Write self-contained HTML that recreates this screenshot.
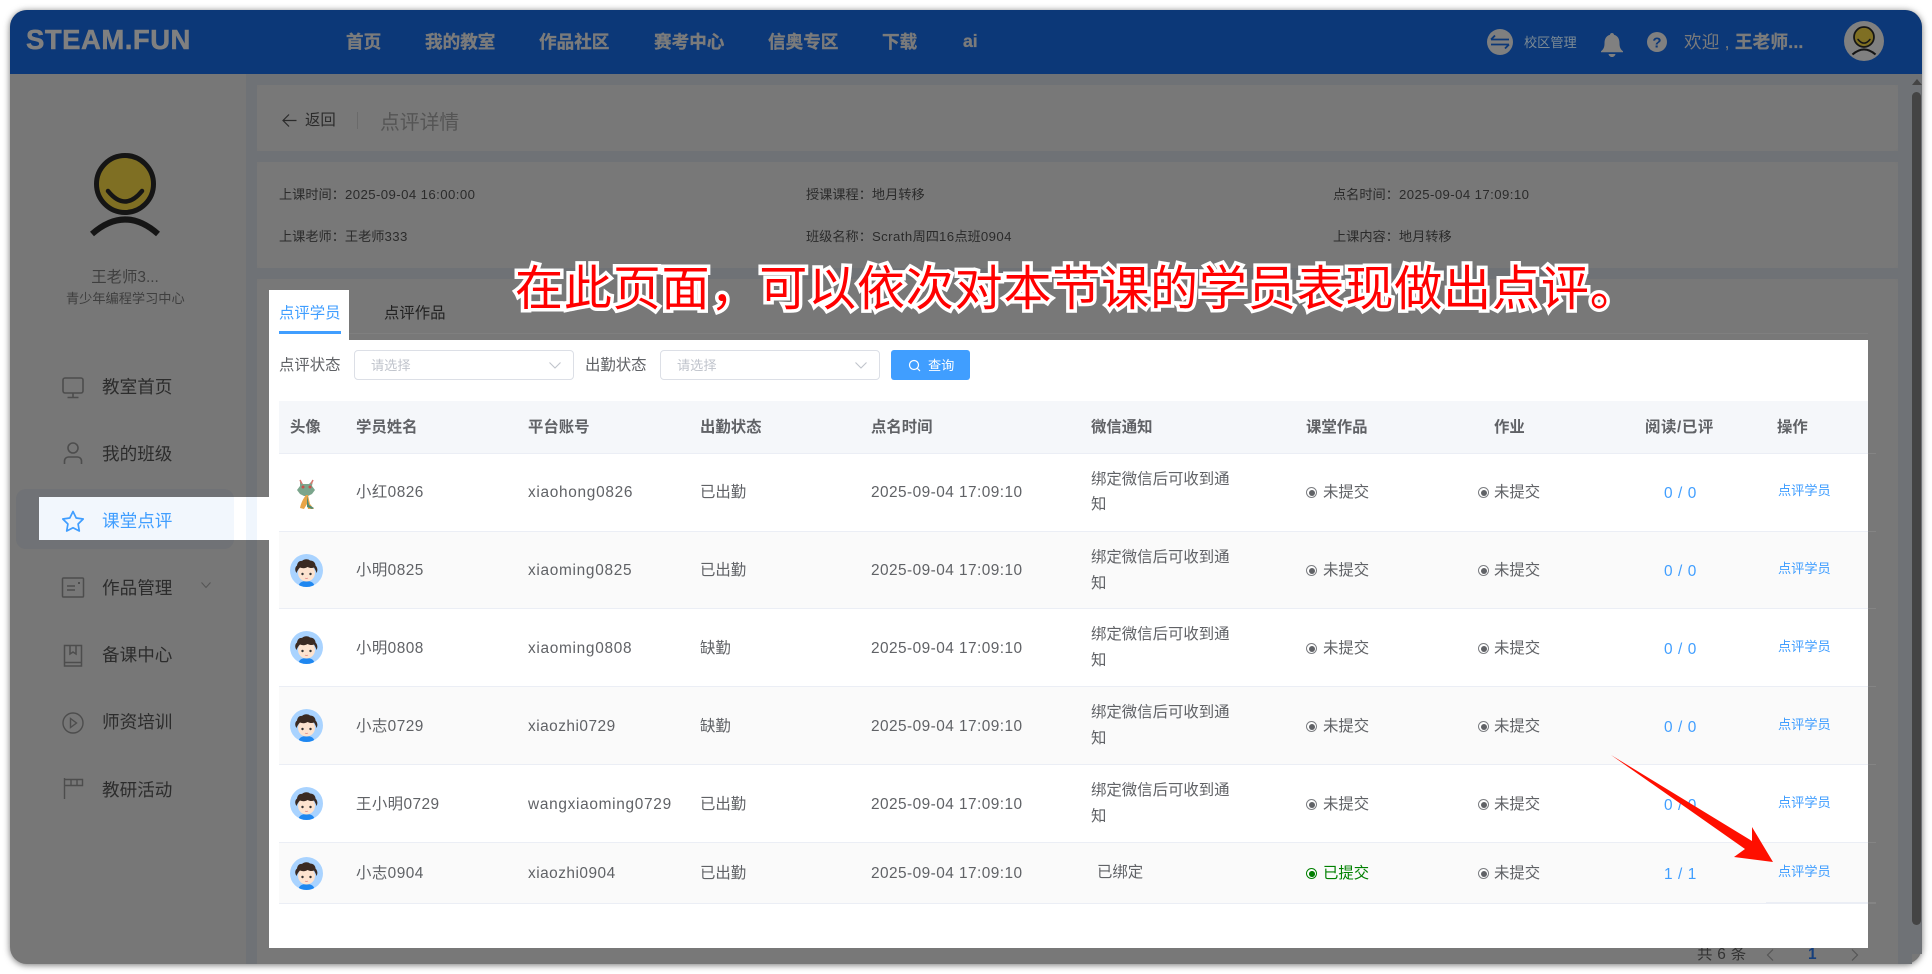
<!DOCTYPE html>
<html lang="zh-CN"><head><meta charset="utf-8"><title>点评详情</title>
<style>
html,body{margin:0;padding:0;background:#fff;width:1932px;height:974px;overflow:hidden}
body{font-family:"Liberation Sans","Noto Sans CJK SC",sans-serif;position:relative}
.a{position:absolute}
.t{position:absolute;white-space:nowrap;line-height:20px;height:20px}
#win{position:absolute;left:10px;top:10px;width:1912px;height:954px;border-radius:17px;overflow:hidden;background:#777;box-shadow:0 1px 7px rgba(0,0,0,.55)}
.nav{font-size:17.6px;font-weight:bold;color:#7b7b7b;-webkit-text-stroke:.35px #7b7b7b}
.i{font-size:13.2px;color:#2b2b2b}
.i span{letter-spacing:.42px}
.m{font-size:17.6px;color:#2c2c2c}
.th{font-size:15.4px;font-weight:bold;color:#606266}
.c{font-size:15.4px;color:#606266;letter-spacing:.45px}
.x{font-size:15.4px;color:#606266;letter-spacing:.7px}
.z{letter-spacing:.5px}
.w{font-size:15.4px;color:#606266;letter-spacing:0}
.op{font-size:13.2px;color:#409eff}
.rd{font-size:15.4px;color:#409eff;letter-spacing:.6px}
.r{position:absolute;width:11px;height:11px;border-radius:50%;border:1px solid #7c7e82;box-sizing:border-box;background:#fff}
.r:after{content:"";position:absolute;left:1.5px;top:1.5px;width:6px;height:6px;border-radius:50%;background:#606266}
.row{position:absolute;left:279px;width:1589px;box-sizing:border-box;border-bottom:1px solid #ebeef5}
.ext{position:absolute;left:1868px;width:8px;height:1px;background:#848484}
svg{position:absolute;overflow:visible}
</style></head><body>
<svg width="0" height="0" style="position:absolute"><defs>
<symbol id="boy" viewBox="0 0 33 33">
<clipPath id="cp"><circle cx="16.5" cy="16.5" r="16.5"/></clipPath>
<g clip-path="url(#cp)"><rect width="33" height="33" fill="#a9d3ff"/>
<path d="M8.500 33c0-4 3-6 8-6s8 2 8 6z" fill="#1f87f0"/>
<ellipse cx="16.500" cy="19" rx="8.500" ry="8.500" fill="#fde3cf"/>
<path d="M6.500 19c-2-3-1.500-6 .5-7.500C7.500 8 10 6.500 12 7c1.500-2 6-2.500 8 -.5 3 0 5.500 2 5.500 5 2 2 2.500 5 1 7.500-.5-2-1.500-4-2.500-5.500-2 1-4.500 .5-6.500-.5-2 1.500-5 1.500-7.500 .5-1.500 1.500-2.500 3-3.500 5.500z" fill="#3a2a22"/>
<circle cx="12.500" cy="20" r="1.200" fill="#333"/><circle cx="20.500" cy="20" r="1.200" fill="#333"/>
<path d="M15 24q1.500 1 3 0" stroke="#d77" stroke-width=".7" fill="none"/></g></symbol>
<symbol id="face" viewBox="0 0 100 100">
<circle cx="50" cy="40" r="28.500" fill="#7f6f23" stroke="#151515" stroke-width="5"/>
<path d="M33 47Q50 68 67 47" fill="none" stroke="#151515" stroke-width="4.500" stroke-linecap="round"/>
<path d="M17 90Q50 61 83 90" fill="none" stroke="#151515" stroke-width="6"/></symbol>
</defs></svg>

<div id="win"></div>
<!-- header -->
<div class="a" style="left:10px;top:10px;width:1912px;height:64px;background:#0c3878;border-radius:17px 17px 0 0"></div>
<div class="t" style="left:26px;top:30px;height:20px;font-size:27.5px;font-weight:bold;color:#808080;letter-spacing:.5px;-webkit-text-stroke:.5px #808080">STEAM.FUN</div>
<div class="t nav" style="left:346px;top:32px">首页</div>
<div class="t nav" style="left:425px;top:32px">我的教室</div>
<div class="t nav" style="left:539px;top:32px">作品社区</div>
<div class="t nav" style="left:654px;top:32px">赛考中心</div>
<div class="t nav" style="left:768px;top:32px">信奥专区</div>
<div class="t nav" style="left:882px;top:32px">下载</div>
<div class="t nav" style="left:963px;top:31px">ai</div>
<svg style="left:1487px;top:29px" width="26" height="26" viewBox="0 0 26 26"><circle cx="13" cy="13" r="13" fill="#7f7f7f"/><path d="M4 10.500h18M4 10.500l4-4M22 15.500H4M22 15.500l-4 4" stroke="#0c3878" stroke-width="1.800" fill="none"/></svg>
<div class="t" style="left:1524px;top:33px;font-size:13.2px;color:#7c8a94">校区管理</div>
<svg style="left:1600px;top:32px" width="24" height="25" viewBox="0 0 24 25"><path d="M12 1c1.200 0 2 .8 2 1.800 4 1 5.500 4.500 5.500 8.500 0 4 1 6 3.500 8v1H1v-1c2.500-2 3.500-4 3.500-8 0-4 1.500-7.500 5.500-8.500C10 1.800 10.800 1 12 1z" fill="#808080"/><path d="M8.500 22h7c-.5 2-2 3-3.500 3s-3-1-3.500-3z" fill="#808080"/></svg>
<svg style="left:1647px;top:32px" width="20" height="20" viewBox="0 0 20 20"><circle cx="10" cy="10" r="10" fill="#808080"/><text x="10" y="15.500" text-anchor="middle" font-family="Liberation Sans" font-weight="bold" font-size="15" fill="#0c3878">?</text></svg>
<div class="t" style="left:1684px;top:32px;font-size:17.6px;color:#7b7b7b;letter-spacing:.2px">欢迎 , <b style="-webkit-text-stroke:.3px #7b7b7b">王老师...</b></div>
<div class="a" style="left:1844px;top:21px;width:40px;height:40px;border-radius:50%;background:#808080"></div>
<svg style="left:1844px;top:21px" width="40" height="40" viewBox="0 0 40 40"><use href="#face" x="2.500" y="2" width="35" height="35"/></svg>

<!-- sidebar gutter + main bg -->
<div class="a" style="left:246px;top:74px;width:11px;height:890px;background:#6f7276"></div>
<div class="a" style="left:257px;top:74px;width:1641px;height:11px;background:#6f7276"></div>
<div class="a" style="left:1898px;top:74px;width:24px;height:880px;background:#6f7276"></div>
<div class="a" style="left:257px;top:151px;width:1641px;height:11px;background:#6f7276"></div>
<div class="a" style="left:257px;top:268px;width:1641px;height:11px;background:#6f7276"></div>
<div class="a" style="left:257px;top:85px;width:1641px;height:66px;background:#787878;border-radius:5px"></div>
<div class="a" style="left:257px;top:162px;width:1641px;height:106px;background:#787878;border-radius:5px"></div>
<div class="a" style="left:257px;top:279px;width:1641px;height:685px;background:#787878;border-radius:5px 5px 0 0"></div>
<div class="a" style="left:1898px;top:954px;width:14px;height:10px;background:#6f7276"></div>
<!-- scrollbar -->
<div class="a" style="left:1912px;top:79px;width:0;height:0;border-left:5px solid transparent;border-right:5px solid transparent;border-bottom:6px solid #444"></div>
<div class="a" style="left:1912px;top:92px;width:9px;height:833px;background:#444;border-radius:5px"></div>

<!-- page heading -->
<svg style="left:282px;top:113px" width="15" height="15" viewBox="0 0 15 15"><path d="M14.500 7.500H1M7 1.500l-6 6 6 6" fill="none" stroke="#2b2b2b" stroke-width="1.200"/></svg>
<div class="t" style="left:305px;top:111px;font-size:15.400px;color:#2b2b2b">返回</div>
<div class="a" style="left:357px;top:112px;width:1px;height:17px;background:#6a6a6a"></div>
<div class="t" style="left:380px;top:113px;font-size:19.800px;color:#555">点评详情</div>

<!-- info -->
<div class="t i" style="left:279px;top:185px">上课时间&#xFF1A;<span>2025-09-04 16:00:00</span></div>
<div class="t i" style="left:806px;top:185px">授课课程&#xFF1A;地月转移</div>
<div class="t i" style="left:1333px;top:185px">点名时间&#xFF1A;<span>2025-09-04 17:09:10</span></div>
<div class="t i" style="left:279px;top:227px">上课老师&#xFF1A;王老师<span>333</span></div>
<div class="t i" style="left:806px;top:227px">班级名称&#xFF1A;<span>Scrath</span>周四<span>16</span>点班<span>0904</span></div>
<div class="t i" style="left:1333px;top:227px">上课内容&#xFF1A;地月转移</div>

<!-- sidebar -->
<svg style="left:75px;top:144px" width="100" height="100" viewBox="0 0 100 100"><use href="#face" x="0" y="0" width="100" height="100"/></svg>
<div class="t" style="left:85px;top:268px;color:#3f3f3f;width:80px;text-align:center;font-size:15.400px">王老师3...</div>
<div class="t" style="left:66px;top:289px;font-size:13.2px;color:#3f3f3f">青少年编程学习中心</div>

<div class="a" style="left:16px;top:489px;width:218px;height:60px;background:#707276;border-radius:10px"></div>
<div class="a" style="left:39px;top:497px;width:195px;height:43px;background:#f2f7fd"></div>
<div class="a" style="left:234px;top:497px;width:12px;height:43px;background:#fff"></div>
<div class="a" style="left:246px;top:497px;width:11px;height:43px;background:#f0f6fd"></div>
<div class="a" style="left:257px;top:497px;width:12px;height:43px;background:#fff"></div>

<svg style="left:61px;top:377px" width="24" height="22" viewBox="0 0 24 22" fill="none" stroke="#4d4d4d" stroke-width="1.600"><rect x="2" y="1" width="20" height="15" rx="2"/><path d="M12 16v4M6.500 20.500h11"/></svg>
<svg style="left:61px;top:441px" width="24" height="24" viewBox="0 0 24 24" fill="none" stroke="#4d4d4d" stroke-width="1.600"><circle cx="12" cy="7" r="5"/><path d="M3.500 23v-3c0-2.500 2-4 4-4h9c2 0 4 1.500 4 4v3"/></svg>
<svg style="left:61px;top:510px" width="24" height="22" viewBox="0 0 24 22" fill="none" stroke="#409eff" stroke-width="1.700"><path d="M12 1.500l3.200 6.500 7 1-5.100 5 1.200 7-6.300-3.300-6.300 3.300 1.200-7-5.100-5 7-1z" stroke-linejoin="round"/></svg>
<svg style="left:61px;top:577px" width="24" height="21" viewBox="0 0 24 21" fill="none" stroke="#4d4d4d" stroke-width="1.500"><rect x="1.500" y="1" width="21" height="19" rx="1"/><path d="M6 9h8M6 13h8"/><path d="M17 6h2" stroke-width="2"/></svg>
<svg style="left:62px;top:644px" width="22" height="23" viewBox="0 0 22 23" fill="none" stroke="#4d4d4d" stroke-width="1.500"><path d="M2.500 19V1.500h17V19M2.500 18.500h17v3.500h-17z"/><path d="M8 2v8l3-2 3 2V2"/></svg>
<svg style="left:61px;top:711px" width="24" height="24" viewBox="0 0 24 24" fill="none" stroke="#4d4d4d" stroke-width="1.400"><circle cx="12" cy="12" r="10"/><path d="M9.500 7.500l6 4.500-6 4.500z"/></svg>
<svg style="left:62px;top:778px" width="22" height="22" viewBox="0 0 22 22" fill="none" stroke="#4d4d4d" stroke-width="1.400"><path d="M2.500 0v21"/><path d="M3 1.500h17.500v6H3M9 1.500v6M15 1.500v6"/></svg>

<div class="t m" style="left:102px;top:377px">教室首页</div>
<div class="t m" style="left:102px;top:444px">我的班级</div>
<div class="t m" style="left:102px;top:511px;color:#409eff">课堂点评</div>
<div class="t m" style="left:102px;top:578px">作品管理</div>
<svg style="left:201px;top:582px" width="10" height="6" viewBox="0 0 10 6"><path d="M.5.500L5 5.500 9.500.5" fill="none" stroke="#555" stroke-width="1"/></svg>
<div class="t m" style="left:102px;top:645px">备课中心</div>
<div class="t m" style="left:102px;top:712px">师资培训</div>
<div class="t m" style="left:102px;top:780px">教研活动</div>

<!-- pagination -->
<div class="t" style="left:1697px;top:945px;font-size:15.400px;color:#333;letter-spacing:.3px">共 6 条</div>
<svg style="left:1766px;top:949px" width="8" height="12" viewBox="0 0 8 12"><path d="M7 .5L1.500 6 7 11.500" fill="none" stroke="#555" stroke-width="1.200"/></svg>
<div class="t" style="left:1808px;top:945px;font-size:15.400px;font-weight:bold;color:#163f7c">1</div>
<svg style="left:1851px;top:949px" width="8" height="12" viewBox="0 0 8 12"><path d="M1 .5L6.500 6 1 11.500" fill="none" stroke="#555" stroke-width="1.200"/></svg>

<!-- tabs + panel -->
<div class="a" style="left:269px;top:290px;width:80px;height:50px;background:#fff"></div>
<div class="a" style="left:349px;top:333px;width:1519px;height:1px;background:#7f7f7f"></div>
<div class="a" style="left:269px;top:340px;width:1599px;height:608px;background:#fff"></div>
<div class="t" style="left:279px;top:304px;font-size:15.400px;color:#409eff">点评学员</div>
<div class="a" style="left:279px;top:331px;width:62px;height:3px;background:#409eff"></div>
<div class="t" style="left:384px;top:304px;font-size:15.400px;color:#222">点评作品</div>

<div class="t w" style="left:279px;top:356px">点评状态</div>
<div class="a" style="left:354px;top:350px;width:220px;height:30px;box-sizing:border-box;border:1px solid #dcdfe6;border-radius:4px;background:#fff"></div>
<div class="t" style="left:371px;top:356px;font-size:13.2px;color:#c0c4cc">请选择</div>
<svg style="left:549px;top:362px" width="12" height="7" viewBox="0 0 12 7"><path d="M.5.500L6 6 11.500.5" fill="none" stroke="#c0c4cc" stroke-width="1.100"/></svg>
<div class="t w" style="left:585px;top:356px">出勤状态</div>
<div class="a" style="left:660px;top:350px;width:220px;height:30px;box-sizing:border-box;border:1px solid #dcdfe6;border-radius:4px;background:#fff"></div>
<div class="t" style="left:677px;top:356px;font-size:13.2px;color:#c0c4cc">请选择</div>
<svg style="left:855px;top:362px" width="12" height="7" viewBox="0 0 12 7"><path d="M.5.500L6 6 11.500.5" fill="none" stroke="#c0c4cc" stroke-width="1.100"/></svg>
<div class="a" style="left:891px;top:350px;width:79px;height:30px;background:#409eff;border-radius:3px"></div>
<svg style="left:908px;top:359px" width="13" height="13" viewBox="0 0 13 13"><circle cx="6" cy="6" r="4.500" fill="none" stroke="#fff" stroke-width="1.200"/><path d="M9.500 9.500L12 12" stroke="#fff" stroke-width="1.200"/></svg>
<div class="t" style="left:928px;top:356px;font-size:13.2px;color:#fff">查询</div>

<!-- table -->
<div class="row" style="top:401px;height:53px;background:#f5f7fa"></div>
<div class="row" style="top:454px;height:78px;background:#fff"></div>
<div class="row" style="top:532px;height:77px;background:#fafafa"></div>
<div class="row" style="top:609px;height:78px;background:#fff"></div>
<div class="row" style="top:687px;height:78px;background:#fafafa"></div>
<div class="row" style="top:765px;height:78px;background:#fff"></div>
<div class="row" style="top:843px;height:61px;background:#fafafa"></div>
<div class="a" style="left:1766px;top:902px;width:102px;height:2px;background:#ebeef5"></div>
<div class="ext" style="top:453px"></div><div class="ext" style="top:531px"></div><div class="ext" style="top:608px"></div><div class="ext" style="top:686px"></div><div class="ext" style="top:764px"></div><div class="ext" style="top:842px"></div><div class="ext" style="top:902px;height:2px"></div>

<div class="t th" style="left:290px;top:418px">头像</div>
<div class="t th" style="left:356px;top:418px">学员姓名</div>
<div class="t th" style="left:528px;top:418px">平台账号</div>
<div class="t th" style="left:700px;top:418px">出勤状态</div>
<div class="t th" style="left:871px;top:418px">点名时间</div>
<div class="t th" style="left:1091px;top:418px">微信通知</div>
<div class="t th" style="left:1306px;top:418px">课堂作品</div>
<div class="t th" style="left:1494px;top:418px">作业</div>
<div class="t th" style="left:1645px;top:418px;letter-spacing:.6px">阅读/已评</div>
<div class="t th" style="left:1777px;top:418px">操作</div>

<!-- dragon -->
<svg style="left:296px;top:479px" width="21" height="31" viewBox="0 0 21 31">
<path d="M4 1l3 4h6l4-4-1 6 3 4-3 4-4 2H8L4 15l-3-4 3-4z" fill="#7ba58c"/>
<path d="M4 1l2 4M17 1l-2 4" stroke="#d9776f" stroke-width="1.500"/>
<circle cx="7" cy="8" r="1.500" fill="#c8504a"/><circle cx="14" cy="8" r="1.500" fill="#c8504a"/>
<path d="M10 16c-3 4-5 8-6 13l4 1 3-5 1 5h6l-4-5-2-9z" fill="#e8a548"/>
<path d="M11 17l2 9 5 3-2 1-5-2z" fill="#4f8a72"/></svg>
<svg style="left:290px;top:554px" width="33" height="33"><use href="#boy" width="33" height="33"/></svg>
<svg style="left:290px;top:631px" width="33" height="33"><use href="#boy" width="33" height="33"/></svg>
<svg style="left:290px;top:709px" width="33" height="33"><use href="#boy" width="33" height="33"/></svg>
<svg style="left:290px;top:787px" width="33" height="33"><use href="#boy" width="33" height="33"/></svg>
<svg style="left:290px;top:857px" width="33" height="33"><use href="#boy" width="33" height="33"/></svg>

<!-- row 1 -->
<div class="t c" style="left:356px;top:483px">小红0826</div><div class="t x" style="left:528px;top:483px">xiaohong0826</div><div class="t w" style="left:700px;top:483px">已出勤</div><div class="t c" style="left:871px;top:483px">2025-09-04 17:09:10</div>
<div class="t w" style="left:1091px;top:470px">绑定微信后可收到通</div><div class="t w" style="left:1091px;top:495px">知</div>
<div class="r" style="left:1306px;top:487px"></div><div class="t w" style="left:1323px;top:483px">未提交</div>
<div class="r" style="left:1478px;top:487px"></div><div class="t w" style="left:1494px;top:483px">未提交</div>
<div class="t rd" style="left:1664px;top:484px">0 / 0</div><div class="t op" style="left:1778px;top:481px">点评学员</div>
<!-- row 2 -->
<div class="t c" style="left:356px;top:561px">小明0825</div><div class="t x" style="left:528px;top:561px">xiaoming0825</div><div class="t w" style="left:700px;top:561px">已出勤</div><div class="t c" style="left:871px;top:561px">2025-09-04 17:09:10</div>
<div class="t w" style="left:1091px;top:548px">绑定微信后可收到通</div><div class="t w" style="left:1091px;top:574px">知</div>
<div class="r" style="left:1306px;top:565px"></div><div class="t w" style="left:1323px;top:561px">未提交</div>
<div class="r" style="left:1478px;top:565px"></div><div class="t w" style="left:1494px;top:561px">未提交</div>
<div class="t rd" style="left:1664px;top:562px">0 / 0</div><div class="t op" style="left:1778px;top:559px">点评学员</div>
<!-- row 3 -->
<div class="t c" style="left:356px;top:639px">小明0808</div><div class="t x" style="left:528px;top:639px">xiaoming0808</div><div class="t w" style="left:700px;top:639px">缺勤</div><div class="t c" style="left:871px;top:639px">2025-09-04 17:09:10</div>
<div class="t w" style="left:1091px;top:625px">绑定微信后可收到通</div><div class="t w" style="left:1091px;top:651px">知</div>
<div class="r" style="left:1306px;top:643px"></div><div class="t w" style="left:1323px;top:639px">未提交</div>
<div class="r" style="left:1478px;top:643px"></div><div class="t w" style="left:1494px;top:639px">未提交</div>
<div class="t rd" style="left:1664px;top:640px">0 / 0</div><div class="t op" style="left:1778px;top:637px">点评学员</div>
<!-- row 4 -->
<div class="t c" style="left:356px;top:717px">小志0729</div><div class="t x z" style="left:528px;top:717px">xiaozhi0729</div><div class="t w" style="left:700px;top:717px">缺勤</div><div class="t c" style="left:871px;top:717px">2025-09-04 17:09:10</div>
<div class="t w" style="left:1091px;top:703px">绑定微信后可收到通</div><div class="t w" style="left:1091px;top:729px">知</div>
<div class="r" style="left:1306px;top:721px"></div><div class="t w" style="left:1323px;top:717px">未提交</div>
<div class="r" style="left:1478px;top:721px"></div><div class="t w" style="left:1494px;top:717px">未提交</div>
<div class="t rd" style="left:1664px;top:718px">0 / 0</div><div class="t op" style="left:1778px;top:715px">点评学员</div>
<!-- row 5 -->
<div class="t c" style="left:356px;top:795px">王小明0729</div><div class="t x" style="left:528px;top:795px">wangxiaoming0729</div><div class="t w" style="left:700px;top:795px">已出勤</div><div class="t c" style="left:871px;top:795px">2025-09-04 17:09:10</div>
<div class="t w" style="left:1091px;top:781px">绑定微信后可收到通</div><div class="t w" style="left:1091px;top:807px">知</div>
<div class="r" style="left:1306px;top:799px"></div><div class="t w" style="left:1323px;top:795px">未提交</div>
<div class="r" style="left:1478px;top:799px"></div><div class="t w" style="left:1494px;top:795px">未提交</div>
<div class="t rd" style="left:1664px;top:796px">0 / 0</div><div class="t op" style="left:1778px;top:793px">点评学员</div>
<!-- row 6 -->
<div class="t c" style="left:356px;top:864px">小志0904</div><div class="t x z" style="left:528px;top:864px">xiaozhi0904</div><div class="t w" style="left:700px;top:864px">已出勤</div><div class="t c" style="left:871px;top:864px">2025-09-04 17:09:10</div>
<div class="t w" style="left:1097px;top:863px">已绑定</div>
<div class="r" style="left:1306px;top:868px;border-color:#008000"></div><div class="a" style="left:1308.500px;top:870.500px;width:6px;height:6px;border-radius:50%;background:#008000"></div><div class="t w" style="left:1323px;top:864px;color:#008000">已提交</div>
<div class="r" style="left:1478px;top:868px"></div><div class="t w" style="left:1494px;top:864px">未提交</div>
<div class="t rd" style="left:1664px;top:865px">1 / 1</div><div class="t op" style="left:1778px;top:862px">点评学员</div>

<!-- annotations -->
<div class="t" style="left:515px;top:254px;height:60px;line-height:60px;font-size:48px;letter-spacing:.85px;color:#ff0000;-webkit-text-stroke:7px #fff;paint-order:stroke fill;font-family:'Noto Sans CJK SC',sans-serif">在此页面&#xFF0C;可以依次对本节课的学员表现做出点评。</div>
<svg style="left:0;top:0" width="1932" height="974" viewBox="0 0 1932 974"><polygon points="1611,755 1752,841 1752,827 1773,862 1734,857 1745,849" fill="#ff0f00"/></svg>
</body></html>
